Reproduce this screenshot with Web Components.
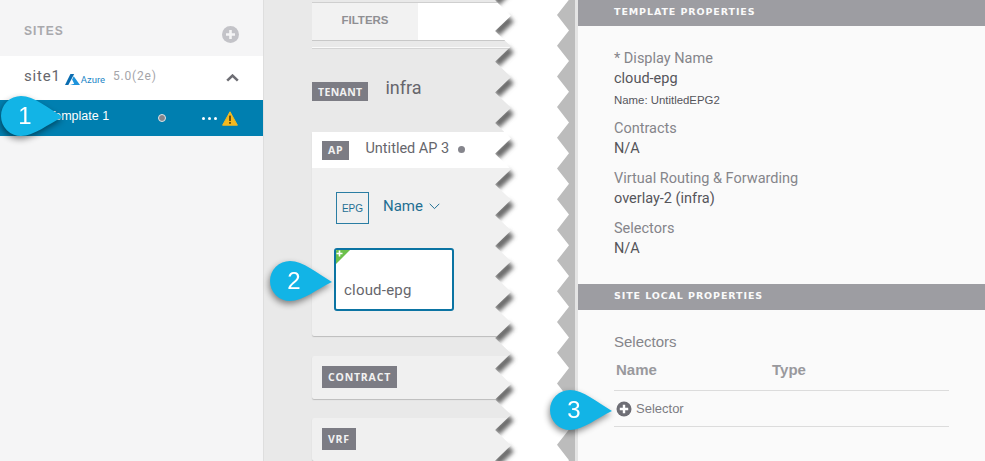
<!DOCTYPE html>
<html>
<head>
<meta charset="utf-8">
<style>
  html, body { margin: 0; padding: 0; background: #fff; }
  body { font-family: Roboto, "Liberation Sans", sans-serif; }
</style>
</head>
<body>
<x-app>
  <x-sidebar slot="sidebar"></x-sidebar>
  <x-schema slot="schema"></x-schema>
  <x-props slot="props"></x-props>
  <x-callout slot="over" num="1" style="left:1px;top:96px"></x-callout>
  <x-callout slot="over" num="2" style="left:270px;top:261px"></x-callout>
  <x-callout slot="over" num="3" style="left:550px;top:390px"></x-callout>
</x-app>
<script>
// small helper so every element has its shadow set up the same way
class Base extends HTMLElement {
    constructor() {
        super();
        this.attachShadow({ mode: 'open' });
    }
}

class App extends Base {
    connectedCallback() {
        this.shadowRoot.innerHTML = `
            <style>
                :host { display: flex; position: relative; width: 985px; height: 461px; overflow: hidden; }
            </style>
            <slot name="sidebar"></slot>
            <slot name="schema"></slot>
            <slot name="props"></slot>
            <slot name="over"></slot>
        `;
    }
}

class Sidebar extends Base {
    connectedCallback() {
        this.shadowRoot.innerHTML = `
            <style>
                :host {
                    display: block; flex: none; width: 263px; height: 461px;
                    background: #f5f5f6; border-right: 1px solid #dedede;
                    font-family: Roboto, "Liberation Sans", sans-serif;
                }
                .head {
                    display: flex; justify-content: space-between; align-items: flex-start;
                    height: 56px; box-sizing: border-box; padding: 24px 24px 0 24px;
                    font: bold 12px "Liberation Sans", sans-serif; letter-spacing: 1px; color: #a9a9ad;
                }
                .head svg { margin: 2px 0 0 0; }
                .site {
                    display: flex; align-items: center; height: 44px; background: #fff;
                    padding: 0 24px; box-sizing: border-box;
                }
                .name { font-size: 15px; letter-spacing: .8px; color: #66666c; margin-top: -4px; }
                .azure { display: flex; align-items: center; gap: 1px; margin-left: 4px; color: #1d86c7; font-size: 9.5px; margin-top: 2px; }
                .ver { margin-left: 8px; margin-top: -4px; font-size: 12px; letter-spacing: .8px; color: #a5a5a9; }
                .chev { margin-left: auto; }
                .row {
                    display: flex; align-items: center; height: 36px; background: #007fb0; color: #fff;
                    font: 12.5px "Liberation Sans", sans-serif; padding: 0 25px 0 48px; box-sizing: border-box;
                }
                .row .txt { width: 110px; margin-top: -4px; }
                .dot { width: 6px; height: 6px; border-radius: 50%; background: #85858c; border: 1px solid #dfe6ea; margin-left: 0; }
                .more { display: flex; gap: 3px; margin-left: auto; margin-right: 5px; }
                .more i { width: 3px; height: 3px; background: #fff; border-radius: 50%; }
            </style>
            <div class="head">
                <span>SITES</span>
                <svg width="17" height="17" viewBox="0 0 17 17">
                    <circle cx="8.5" cy="8.5" r="8.5" fill="#c3c3c8"/>
                    <path d="M8.5 4v9M4 8.5h9" stroke="#f5f5f6" stroke-width="2.6"/>
                </svg>
            </div>
            <div class="site">
                <span class="name">site1</span>
                <span class="azure">
                    <svg width="15" height="11" viewBox="0 0 18 13">
                        <path d="M6.5 0H11L4 13H0z" fill="#0a6cb0"/>
                        <path d="M10.5 2.5L18 13H6l5-1.5L8.5 6.5z" fill="#1e94dc"/>
                    </svg>
                    <span>Azure</span>
                </span>
                <span class="ver">5.0(2e)</span>
                <svg class="chev" width="13" height="8" viewBox="0 0 13 8">
                    <path d="M1.2 6.6L6.5 1.6l5.3 5" fill="none" stroke="#6e6e74" stroke-width="2.6"/>
                </svg>
            </div>
            <div class="row">
                <span class="txt">Template 1</span>
                <span class="dot"></span>
                <span class="more"><i></i><i></i><i></i></span>
                <svg width="16" height="15" viewBox="0 0 16 15">
                    <path d="M8 .8L15.4 14.2H.6z" fill="#f5b91f" stroke="#f5b91f" stroke-linejoin="round"/>
                    <rect x="7.1" y="4.6" width="1.8" height="5.4" fill="#5c4a12"/>
                    <rect x="7.1" y="11" width="1.8" height="1.8" fill="#5c4a12"/>
                </svg>
            </div>
        `;
    }
}

class Badge extends Base {
    connectedCallback() {
        this.shadowRoot.innerHTML = `
            <style>
                :host {
                    display: inline-flex; align-items: center; height: 19px; padding: 0 6px; box-sizing: border-box;
                    background: #7c7c84; color: #f2f2f2;
                    font: bold 10.5px "Open Sans", "Liberation Sans", sans-serif; letter-spacing: .8px;
                }
            </style>
            <slot></slot>
        `;
    }
}

class Card extends Base {
    connectedCallback() {
        this.shadowRoot.innerHTML = `
            <style>
                :host {
                    display: block; background: #f0f0f0; border-radius: 2px 0 0 2px;
                    box-shadow: 0 1px 1px #bcbcbc;
                    height: var(--h, 43px); box-sizing: border-box;
                }
            </style>
            <slot></slot>
        `;
    }
}

class Epg extends Base {
    connectedCallback() {
        this.shadowRoot.innerHTML = `
            <style>
                :host {
                    display: block; position: relative; width: 120px; height: 63px; box-sizing: border-box;
                    background: #fff; border: 2px solid #0b74a3; border-radius: 3px; overflow: hidden;
                    color: #66666c; font-size: 15px; letter-spacing: .2px;
                }
                .tri { position: absolute; left: -2px; top: -2px; }
                .txt { position: absolute; left: 8px; top: 31px; }
            </style>
            <svg class="tri" width="18" height="18" viewBox="0 0 18 18">
                <path d="M0 0H18L0 18z" fill="#6cc04a"/>
                <path d="M5.5 2.5v6M2.5 5.5h6" stroke="#fff" stroke-width="1.6"/>
            </svg>
            <span class="txt"><slot></slot></span>
        `;
    }
}

class Schema extends Base {
    connectedCallback() {
        this.shadowRoot.innerHTML = `
            <style>
                :host {
                    display: block; position: relative; flex: none; width: 311px; height: 461px; overflow: hidden;
                    background: #e9e9e9; padding: 3px 0 0 48px; box-sizing: border-box;
                    font-family: Roboto, "Liberation Sans", sans-serif;
                }
                .filters {
                    display: flex; height: 38px; background: #fff; border-bottom: 1px solid #c8c8c8;
                    box-shadow: 0 -1px 0 #cfcfcf; box-sizing: border-box;
                }
                .filters b {
                    display: flex; align-items: center; justify-content: center; width: 106px; padding-bottom: 3px;
                    background: #f2f2f2; color: #8f8f93; box-sizing: border-box;
                    font: bold 11.5px "Liberation Sans", sans-serif;
                }
                .rule { height: 1px; background: #fafafa; border-bottom: 1px solid #d4d4d4; margin-top: 6px; }
                .tenant { display: flex; align-items: center; gap: 17px; margin-top: 33px; height: 19px; }
                .tenant x-badge { letter-spacing: .35px; }
                .tenant span { font-size: 18px; color: #66666c; margin-top: -8px; }
                .ap { --h: 204px; margin-top: 31px; }
                .ap-head { display: flex; align-items: center; height: 36px; background: #fff; padding: 0 10px; box-sizing: border-box; }
                .ap-head span { margin-left: 16px; margin-top: -4px; font-size: 14.5px; color: #66666c; }
                .ap-head i { width: 7px; height: 7px; border-radius: 50%; background: #85858c; margin: -2px 0 0 9px; }
                .epg-row { display: flex; align-items: flex-start; padding: 24px 0 0 24px; height: 80px; box-sizing: border-box; color: #1f6f93; }
                .epg-box {
                    display: flex; align-items: center; justify-content: center; width: 33px; height: 32px; box-sizing: border-box;
                    border: 1px solid #2a7da3; font: 10px "Liberation Sans", sans-serif;
                }
                .epg-name { display: flex; align-items: center; gap: 6px; margin-left: 14px; font-size: 15px; margin-top: 5px; }
                x-epg { margin-left: 22px; }
                .contract { margin-top: 20px; padding: 10px 0 0 10px; }
                .vrf { margin-top: 19px; padding: 10px 0 0 10px; }
                .contract x-badge, .vrf x-badge { height: 22px; }
                x-tear { position: absolute; left: 231px; top: 0; }
            </style>
            <div class="filters"><b>FILTERS</b></div>
            <div class="rule"></div>
            <div class="tenant"><x-badge>TENANT</x-badge><span>infra</span></div>
            <x-card class="ap">
                <div class="ap-head"><x-badge>AP</x-badge><span>Untitled AP 3</span><i></i></div>
                <div class="epg-row">
                    <div class="epg-box">EPG</div>
                    <div class="epg-name">Name
                        <svg width="11" height="7" viewBox="0 0 11 7"><path d="M.7.8L5.5 5.6 10.3.8" fill="none" stroke="#1f6f93"/></svg>
                    </div>
                </div>
                <x-epg>cloud-epg</x-epg>
            </x-card>
            <x-card class="contract"><x-badge>CONTRACT</x-badge></x-card>
            <x-card class="vrf"><x-badge>VRF</x-badge></x-card>
            <x-tear></x-tear>
        `;
    }
}

// the torn gap between the schema and the properties
class Tear extends Base {
    connectedCallback() {
        const period = 30.7;
        const left = [], right = [];
        let folds = '';
        for (let i = -1; i < 16; ++i) {
            const y = 31 + period * i;
            left.push(`0,${y.toFixed(1)}`, `16,${(y + period / 2).toFixed(1)}`);
            const r = 15 + period * i;
            right.push(`62,${r.toFixed(1)}`, `74,${(r + period / 2).toFixed(1)}`);
            // shadow runs along the upper side of each notch, offset into the gap
            folds += `M1 ${(y + 2).toFixed(1)}L16 ${(y - period / 2 + 3).toFixed(1)}`;
        }
        const shape = left.concat(right.reverse()).join(' ');
        this.shadowRoot.innerHTML = `
            <style>
                :host { display: block; width: 80px; height: 461px; }
                svg { display: block; }
            </style>
            <svg width="80" height="461" viewBox="0 0 80 461">
                <defs>
                    <clipPath id="gap"><polygon points="${shape}"/></clipPath>
                    <filter id="soft" filterUnits="userSpaceOnUse" x="-10" y="-30" width="60" height="520">
                        <feGaussianBlur stdDeviation="2.2"/>
                    </filter>
                </defs>
                <rect x="58" y="0" width="22" height="461" fill="#bcbcbc"/>
                <polygon points="${shape}" fill="#fff"/>
                <g clip-path="url(#gap)">
                    <path d="${folds}" fill="none" stroke="#6a6a6a" stroke-width="8.5" filter="url(#soft)"/>
                </g>
            </svg>
        `;
    }
}

class PanelHead extends Base {
    connectedCallback() {
        this.shadowRoot.innerHTML = `
            <style>
                :host {
                    display: flex; align-items: center; height: 26px; box-sizing: border-box; padding: 0 0 3px 36px;
                    background: #9d9da2; color: #fafafa;
                    font: bold 9.5px "DejaVu Sans", "Liberation Sans", sans-serif; letter-spacing: .9px;
                }
            </style>
            <slot></slot>
        `;
    }
}

class Prop extends Base {
    connectedCallback() {
        this.shadowRoot.innerHTML = `
            <style>
                :host { display: block; font-size: 14.5px; line-height: 20px; color: #55555a; margin-top: 10px; }
                .label { color: #85858a; }
                .note { font: 11.4px/14px "Liberation Sans", sans-serif; padding: 4px 0 2px; }
            </style>
            <div class="label">${this.getAttribute('label')}</div>
            <div><slot></slot></div>
            ${this.hasAttribute('note') ? `<div class="note">${this.getAttribute('note')}</div>` : ''}
        `;
    }
}

class Props extends Base {
    connectedCallback() {
        this.shadowRoot.innerHTML = `
            <style>
                :host {
                    display: block; flex: none; width: 410px; height: 461px; box-sizing: border-box;
                    background: #fafafa; border-left: 3px solid #e4e4e4;
                    font-family: Roboto, "Liberation Sans", sans-serif;
                }
                .top { height: 258px; padding: 13px 36px 0; box-sizing: border-box; }
                .local { padding: 23px 36px 0; font: 15px "Liberation Sans", sans-serif; color: #85858a; }
                .cols {
                    display: flex; padding: 9px 0 12px 2px; border-bottom: 1px solid #dcdcdc; width: 335px; box-sizing: border-box;
                    font-weight: bold; color: #99999d; margin-top: 2px;
                }
                .cols span { width: 156px; }
                .add {
                    display: flex; align-items: center; gap: 4px; height: 36px; width: 335px; box-sizing: border-box;
                    padding-left: 2px; border-bottom: 1px solid #dcdcdc; font-size: 13px; color: #7c7c82;
                }
            </style>
            <x-panel-head>TEMPLATE PROPERTIES</x-panel-head>
            <div class="top">
                <x-prop label="* Display Name" note="Name: UntitledEPG2">cloud-epg</x-prop>
                <x-prop label="Contracts">N/A</x-prop>
                <x-prop label="Virtual Routing &amp; Forwarding">overlay-2 (infra)</x-prop>
                <x-prop label="Selectors">N/A</x-prop>
            </div>
            <x-panel-head>SITE LOCAL PROPERTIES</x-panel-head>
            <div class="local">
                <div>Selectors</div>
                <div class="cols"><span>Name</span><span>Type</span></div>
                <div class="add">
                    <svg width="16" height="16" viewBox="0 0 16 16">
                        <circle cx="8" cy="8" r="7.5" fill="#6e6e75"/>
                        <path d="M8 3.8v8.4M3.8 8h8.4" stroke="#fff" stroke-width="2.4"/>
                    </svg>
                    <span>Selector</span>
                </div>
            </div>
        `;
    }
}

// numbered tutorial marker, sits over the screenshot
class Callout extends Base {
    connectedCallback() {
        this.shadowRoot.innerHTML = `
            <style>
                :host { display: block; position: absolute; width: 62px; height: 40px; filter: drop-shadow(-1px 3px 3px rgba(0,0,0,.45)); }
                svg { position: absolute; left: 0; top: 0; }
                span {
                    position: absolute; left: 0; top: 0; width: 48px; text-align: center;
                    color: #fff; font: 24px/40px "Liberation Sans", sans-serif;
                }
            </style>
            <svg width="62" height="40" viewBox="0 0 62 40">
                <path d="M20 0C33 0 47 12 62 21C47 28 33 40 20 40A20 20 0 0 1 20 0z" fill="#12b4e6"/>
            </svg>
            <span>${this.getAttribute('num')}</span>
        `;
    }
}

customElements.define('x-app', App);
customElements.define('x-sidebar', Sidebar);
customElements.define('x-badge', Badge);
customElements.define('x-card', Card);
customElements.define('x-epg', Epg);
customElements.define('x-tear', Tear);
customElements.define('x-schema', Schema);
customElements.define('x-panel-head', PanelHead);
customElements.define('x-prop', Prop);
customElements.define('x-props', Props);
customElements.define('x-callout', Callout);
</script>
</body>
</html>
